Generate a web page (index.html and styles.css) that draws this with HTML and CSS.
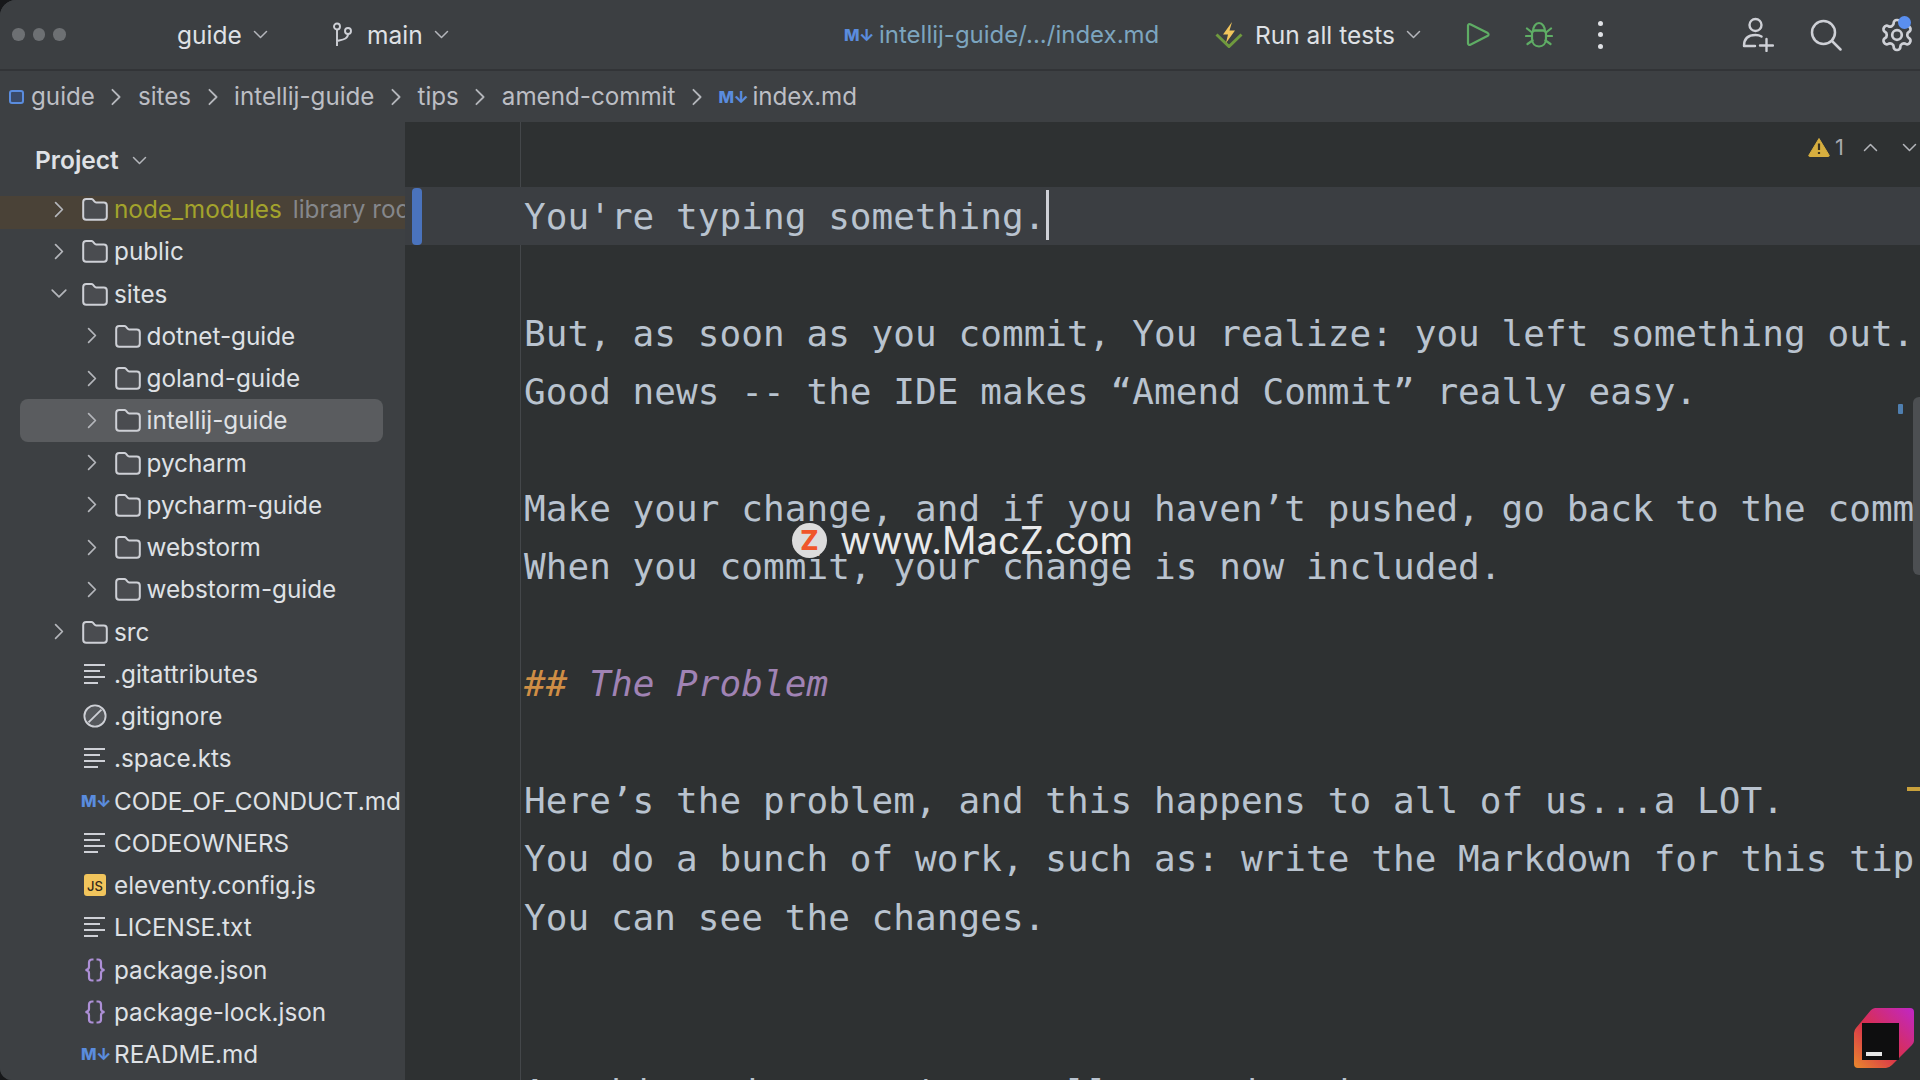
FILE: index.html
```html
<!DOCTYPE html>
<html lang="en">
<head>
<meta charset="utf-8">
<title>intellij-guide index.md</title>
<link rel="stylesheet" href="styles.css">
</head>
<body>
<svg class="defs" width="0" height="0" aria-hidden="true">
  <symbol id="folder" viewBox="0 0 26 24"><path d="M1.2 5a3 3 0 0 1 3-3h5.2a2 2 0 0 1 1.5.7l1.7 2a2 2 0 0 0 1.5.7h7.7a3 3 0 0 1 3 3v11.4a3 3 0 0 1-3 3H4.2a3 3 0 0 1-3-3z" fill="#4a4c50" stroke="#ced0d6" stroke-width="2"/></symbol>
  <symbol id="right" viewBox="0 0 20 20"><path d="M6 2l8 8-8 8" fill="none" stroke="#b4b6bb" stroke-width="2" stroke-linecap="round" stroke-linejoin="round"/></symbol>
  <symbol id="down" viewBox="0 0 20 20"><path d="M2 6l8 8 8-8" fill="none" stroke="#b4b6bb" stroke-width="2" stroke-linecap="round" stroke-linejoin="round"/></symbol>
  <symbol id="txt" viewBox="0 0 26 24"><path d="M2 3h21M2 9h16M2 15h21M2 21h14" fill="none" stroke="#ced0d6" stroke-width="2"/></symbol>
  <symbol id="ban" viewBox="0 0 26 26"><circle cx="13" cy="13" r="11.5" fill="#55585c" stroke="#ced0d6" stroke-width="2"/><path d="M6 20L20 6" stroke="#ced0d6" stroke-width="2"/></symbol>
  <symbol id="brace" viewBox="0 0 26 24"><path d="M11.500 1.500H10a3 3 0 0 0-3 3v4.500c0 1.700-1.200 2.700-3.500 3 2.300.3 3.500 1.300 3.500 3v4.500a3 3 0 0 0 3 3h1.500M14.500 1.500H16a3 3 0 0 1 3 3v4.500c0 1.700 1.200 2.700 3.500 3-2.300.3-3.500 1.300-3.500 3v4.500a3 3 0 0 1-3 3h-1.500" fill="none" stroke="#ad8fd6" stroke-width="2.200"/></symbol>
</svg>

<div class="window">
  <header class="titlebar">
    <div class="tb-lights"><i class="light"></i><i class="light"></i><i class="light"></i></div>
    <div class="tb-project"><span>guide</span><svg class="chev"><use href="#down"/></svg></div>
    <div class="tb-branch">
      <svg class="branch" viewBox="0 0 19 25"><g fill="none" stroke="#ced0d6" stroke-width="1.900"><circle cx="4" cy="4.500" r="3"/><circle cx="15" cy="9" r="3"/><path d="M4 7.500V24M15 12c0 5-5 5.500-11 7"/></g></svg>
      <span>main</span><svg class="chev"><use href="#down"/></svg>
    </div>
    <div class="tb-file"><b class="md">M↓</b><span>intellij-guide/.../index.md</span></div>
    <div class="tb-run">
      <svg class="bolt" viewBox="0 0 28 26"><path d="M1.500 12.500L14 24.500l12.500-12" fill="none" stroke="#6f9a3e" stroke-width="3"/><path d="M17 0L8 12.500h5l-2 8.500 9-12.500h-5.500z" fill="#f2c55c"/></svg>
      <span>Run all tests</span><svg class="chev run-chev"><use href="#down"/></svg>
    </div>
    <div class="tb-play"><svg viewBox="0 0 24 25"><path d="M2 3.500v18a1.500 1.500 0 0 0 2.300 1.200l17.500-9a1.500 1.500 0 0 0 0-2.600L4.300 2.300A1.500 1.500 0 0 0 2 3.500z" fill="none" stroke="#5fad65" stroke-width="2.200" stroke-linejoin="round"/></svg></div>
    <div class="tb-bug"><svg viewBox="0 0 28 27"><g fill="none" stroke="#5fad65" stroke-width="2.200" stroke-linecap="round"><path d="M8 10.500c0-4.500 2.500-8.500 6-8.500s6 4 6 8.500"/><path d="M7 12.500c0-2 1-3 3-3h8c2 0 3 1 3 3v5c0 5-3 8-7 8s-7-3-7-8z"/><path d="M9 9.500h10M2 7.500l5 4M26 7.500l-5 4M1 15h6M27 15h-6M2.500 23l5-3.500M25.500 23l-5-3.500"/></g></svg></div>
    <div class="tb-more"><i></i><i></i><i></i></div>
    <div class="tb-user"><svg viewBox="0 0 32 35"><g fill="none" stroke="#ced0d6" stroke-width="2.400" stroke-linecap="round"><circle cx="13.500" cy="8" r="6"/><path d="M2 29c0-7 4-11 11.500-11 2.500 0 4.500.5 6 1.500M2 29h11M18 28.500h13M24.500 22v12"/></g></svg></div>
    <div class="tb-search"><svg viewBox="0 0 32 32"><g fill="none" stroke="#ced0d6" stroke-width="2.500" stroke-linecap="round"><circle cx="13.500" cy="13.500" r="11.500"/><path d="M22 22l8.500 8.500"/></g></svg></div>
    <div class="tb-gear">
      <svg viewBox="0 0 24 24"><g fill="none" stroke="#ced0d6" stroke-width="1.800" stroke-linejoin="round"><path d="M12.220 2h-.44a2 2 0 0 0-2 2v.18a2 2 0 0 1-1 1.730l-.43.25a2 2 0 0 1-2 0l-.15-.08a2 2 0 0 0-2.730.73l-.22.38a2 2 0 0 0 .73 2.730l.15.1a2 2 0 0 1 1 1.720v.51a2 2 0 0 1-1 1.740l-.15.09a2 2 0 0 0-.73 2.730l.22.38a2 2 0 0 0 2.730.73l.15-.08a2 2 0 0 1 2 0l.43.25a2 2 0 0 1 1 1.730V20a2 2 0 0 0 2 2h.44a2 2 0 0 0 2-2v-.18a2 2 0 0 1 1-1.730l.43-.25a2 2 0 0 1 2 0l.15.08a2 2 0 0 0 2.730-.73l.22-.39a2 2 0 0 0-.73-2.730l-.15-.08a2 2 0 0 1-1-1.740v-.5a2 2 0 0 1 1-1.740l.15-.09a2 2 0 0 0 .73-2.730l-.22-.38a2 2 0 0 0-2.730-.73l-.15.08a2 2 0 0 1-2 0l-.43-.25a2 2 0 0 1-1-1.730V4a2 2 0 0 0-2-2z"/><circle cx="12" cy="12" r="3.200"/></g></svg>
      <i class="dot"></i>
    </div>
  </header>

  <nav class="crumbs">
    <span class="crumb-root"><i class="module"></i>guide</span>
    <svg class="sep"><use href="#right"/></svg><span>sites</span>
    <svg class="sep"><use href="#right"/></svg><span>intellij-guide</span>
    <svg class="sep"><use href="#right"/></svg><span>tips</span>
    <svg class="sep"><use href="#right"/></svg><span>amend-commit</span>
    <svg class="sep"><use href="#right"/></svg><span class="crumb-file"><b class="md">M↓</b>index.md</span>
  </nav>

  <main class="body">
    <aside class="sidebar">
      <div class="side-head"><span>Project</span><svg class="chev"><use href="#down"/></svg></div>
      <div class="row l1 lib"><svg class="arrow"><use href="#right"/></svg><svg class="ico"><use href="#folder"/></svg><span class="name">node_modules</span><span class="hint">library root</span></div>
      <div class="row l1"><svg class="arrow"><use href="#right"/></svg><svg class="ico"><use href="#folder"/></svg><span class="name">public</span></div>
      <div class="row l1"><svg class="arrow"><use href="#down"/></svg><svg class="ico"><use href="#folder"/></svg><span class="name">sites</span></div>
      <div class="row l2"><svg class="arrow"><use href="#right"/></svg><svg class="ico"><use href="#folder"/></svg><span class="name">dotnet-guide</span></div>
      <div class="row l2"><svg class="arrow"><use href="#right"/></svg><svg class="ico"><use href="#folder"/></svg><span class="name">goland-guide</span></div>
      <div class="row l2 sel"><svg class="arrow"><use href="#right"/></svg><svg class="ico"><use href="#folder"/></svg><span class="name">intellij-guide</span></div>
      <div class="row l2"><svg class="arrow"><use href="#right"/></svg><svg class="ico"><use href="#folder"/></svg><span class="name">pycharm</span></div>
      <div class="row l2"><svg class="arrow"><use href="#right"/></svg><svg class="ico"><use href="#folder"/></svg><span class="name">pycharm-guide</span></div>
      <div class="row l2"><svg class="arrow"><use href="#right"/></svg><svg class="ico"><use href="#folder"/></svg><span class="name">webstorm</span></div>
      <div class="row l2"><svg class="arrow"><use href="#right"/></svg><svg class="ico"><use href="#folder"/></svg><span class="name">webstorm-guide</span></div>
      <div class="row l1"><svg class="arrow"><use href="#right"/></svg><svg class="ico"><use href="#folder"/></svg><span class="name">src</span></div>
      <div class="row l1"><i class="arrow"></i><svg class="ico"><use href="#txt"/></svg><span class="name">.gitattributes</span></div>
      <div class="row l1"><i class="arrow"></i><svg class="ico"><use href="#ban"/></svg><span class="name">.gitignore</span></div>
      <div class="row l1"><i class="arrow"></i><svg class="ico"><use href="#txt"/></svg><span class="name">.space.kts</span></div>
      <div class="row l1"><i class="arrow"></i><b class="md ico-md">M↓</b><span class="name">CODE_OF_CONDUCT.md</span></div>
      <div class="row l1"><i class="arrow"></i><svg class="ico"><use href="#txt"/></svg><span class="name">CODEOWNERS</span></div>
      <div class="row l1"><i class="arrow"></i><b class="js">JS</b><span class="name">eleventy.config.js</span></div>
      <div class="row l1"><i class="arrow"></i><svg class="ico"><use href="#txt"/></svg><span class="name">LICENSE.txt</span></div>
      <div class="row l1"><i class="arrow"></i><svg class="ico"><use href="#brace"/></svg><span class="name">package.json</span></div>
      <div class="row l1"><i class="arrow"></i><svg class="ico"><use href="#brace"/></svg><span class="name">package-lock.json</span></div>
      <div class="row l1"><i class="arrow"></i><b class="md ico-md">M↓</b><span class="name">README.md</span></div>
    </aside>

    <section class="editor">
      <div class="inspect">
        <svg class="warn" viewBox="0 0 22 20"><path d="M11 1.500L21 18a1 1 0 0 1-.8 1.500H1.800A1 1 0 0 1 1 18z" fill="#d6ae3f" stroke="#d6ae3f" stroke-linejoin="round"/><path d="M11 6.500v6.500M11 15v2" stroke="#3c3320" stroke-width="2.200"/></svg>
        <span class="count">1</span>
        <svg class="nav up"><use href="#down"/></svg>
        <svg class="nav"><use href="#down"/></svg>
      </div>
      <div class="ln cur">You're typing something.<i class="caret"></i></div>
      <div class="ln"></div>
      <div class="ln">But, as soon as you commit, You realize: you left something out.</div>
      <div class="ln">Good news -- the IDE makes “Amend Commit” really easy.</div>
      <div class="ln"></div>
      <div class="ln">Make your change, and if you haven’t pushed, go back to the commit</div>
      <div class="ln">When you commit, your change is now included.</div>
      <div class="ln"></div>
      <div class="ln head"><em class="hash">##</em> <em class="title">The Problem</em></div>
      <div class="ln"></div>
      <div class="ln">Here’s the problem, and this happens to all of us...a LOT.</div>
      <div class="ln">You do a bunch of work, such as: write the Markdown for this tip</div>
      <div class="ln">You can see the changes.</div>
      <div class="ln"></div>
      <div class="ln"></div>
      <div class="ln">At this point, you've really committed</div>
      <i class="thumb"></i>
      <i class="mark-blue"></i>
      <i class="mark-yellow"></i>
      <svg class="toolbox" viewBox="0 0 60 60">
        <defs><linearGradient id="tb" x1="0" y1="1" x2="1" y2="0"><stop offset="0" stop-color="#e8892c"/><stop offset=".45" stop-color="#d92f4d"/><stop offset="1" stop-color="#c026c8"/></linearGradient></defs>
        <path d="M21 0h35a4 4 0 0 1 4 4v29a6 6 0 0 1-2 4L38 57a10 10 0 0 1-6 3H4a4 4 0 0 1-4-4V25a8 8 0 0 1 2-5L17 2a7 7 0 0 1 4-2z" fill="url(#tb)"/>
        <rect x="8" y="15" width="37" height="37" fill="#0e0e0f"/>
        <rect x="12" y="44" width="16" height="4" fill="#e6e6e6"/>
      </svg>
    </section>
  </main>

  <div class="watermark"><i class="wm-badge">Z</i><span>www.MacZ.com</span></div>
</div>
</body>
</html>
```

FILE: styles.css
```css
* { box-sizing: border-box; }
html, body { margin: 0; height: 100%; background: #17181a; overflow: hidden; }
body { font-family: Inter, "Noto Sans", sans-serif; color: #dfe1e5; }
i { font-style: normal; }
.defs { position: absolute; }

.window {
  position: relative;
  width: 1920px;
  height: 1080px;
  display: flex;
  flex-direction: column;
  overflow: hidden;
  background: #3d4043;
  border-radius: 16px 0 0 12px;
}

/* title bar */
.titlebar {
  flex: none;
  height: 71px;
  display: flex;
  align-items: center;
  background: #3c3f42;
  border-bottom: 2px solid #323437;
  font-size: 24.500px;
}
.titlebar > div { flex: none; display: flex; align-items: center; height: 100%; }
.tb-lights { width: 177px; padding-left: 12px; gap: 8px; }
.light { width: 12.500px; height: 12.500px; border-radius: 50%; background: #6d7073; }
.tb-project { width: 156px; }
.tb-branch { width: 511px; }
.tb-file { width: 371px; color: #7ca5bf; font-size: 24px; }
.tb-run { width: 251px; }
.tb-play { width: 59px; }
.tb-bug { width: 66px; }
.tb-more { width: 18px; flex-direction: column; justify-content: center; gap: 6.500px; padding-left: 0; }
.tb-user { margin-left: 133px; width: 68px; }
.tb-search { width: 69px; }
.tb-gear { position: relative; width: 38px; }

.chev { width: 15px; height: 15px; margin-left: 11px; }
.branch { width: 19px; height: 25px; margin-right: 15px; }
.bolt { width: 28px; height: 26px; margin-right: 12px; }
.run-chev { margin-left: 11px; }
.tb-play svg { width: 24px; height: 25px; }
.tb-bug svg { width: 28px; height: 27px; }
.tb-more i { width: 5px; height: 5px; border-radius: 50%; background: #dfe1e5; }
.tb-user svg { width: 32px; height: 35px; }
.tb-search svg { width: 32px; height: 32px; }
.tb-gear svg { width: 36px; height: 36px; }
.dot {
  position: absolute;
  top: 16px;
  left: 19px;
  width: 13px;
  height: 13px;
  border-radius: 50%;
  background: #5a8ff0;
}
.md { font-weight: 800; color: #5a8cde; font-size: 16.500px; letter-spacing: -.5px; }
.tb-file .md { width: 35px; }

/* breadcrumbs */
.crumbs {
  flex: none;
  height: 51px;
  padding-left: 9px;
  display: flex;
  align-items: center;
  gap: 17.500px;
  background: #3d4043;
  color: #bcbec4;
  font-size: 24.200px;
}
.crumb-root, .crumb-file { display: flex; align-items: center; }
.module {
  width: 15px;
  height: 14px;
  margin-right: 7px;
  border: 2px solid #5a8cde;
  border-radius: 3px;
  background: #3a4a68;
}
.sep { flex: none; width: 18px; height: 18px; margin: 0 -5px; }
.crumb-file .md { width: 34px; }

/* main */
.body { flex: 1; min-height: 0; display: flex; }

.sidebar { flex: none; width: 405px; background: #3d4043; overflow: hidden; font-size: 24.300px; }
.side-head {
  height: 66px;
  padding: 20px 0 10px 35px;
  display: flex;
  align-items: center;
  font-weight: 600;
  font-size: 24.500px;
}
.side-head .chev { margin-left: 13px; }
.row {
  height: 42.250px;
  display: flex;
  align-items: center;
  white-space: nowrap;
  overflow: hidden;
}
.l1 { padding-left: 49px; }
.l2 { padding-left: 81.500px; }
.sel { margin: 0 22px 0 20px; padding-left: 61.500px; height: 42.250px; border-radius: 8px; background: #5a5c5f; }
.lib { background: linear-gradient(transparent 8px, #4a4237 8px, #4a4237 41px, transparent 41px); }
.arrow { flex: none; width: 20px; height: 17px; }
.ico { flex: none; width: 26px; height: 24px; margin: 0 6px 0 13px; }
.ico-md { flex: none; width: 33px; margin-left: 12px; text-align: left; }
.js {
  flex: none;
  width: 22px;
  height: 22px;
  margin: 0 8px 0 15px;
  border-radius: 3px;
  background: #f2c55c;
  color: #33291a;
  font-size: 13px;
  font-weight: 500;
  line-height: 24px;
  text-align: center;
}
.lib .name { color: #a3a32c; }
.hint { margin-left: 11px; color: #85878b; }

/* editor */
.editor {
  position: relative;
  flex: 1;
  min-width: 0;
  padding-top: 65px;
  overflow: hidden;
  background: linear-gradient(90deg, transparent 115px, #44474a 115px, #44474a 116px, transparent 116px), #2e3132;
  font-family: "DejaVu Sans Mono", "Liberation Mono", monospace;
  font-size: 36px;
  letter-spacing: .05px;
  color: #b9c3cf;
}
.ln {
  height: 58.400px;
  line-height: 58.400px;
  padding: 1px 0 0 119px;
  white-space: pre;
}
.cur { position: relative; background: #3b3e42; }
.cur::before {
  content: "";
  position: absolute;
  left: 7px;
  top: 1px;
  width: 10px;
  height: 57px;
  border-radius: 4px;
  background: #4a73bd;
}
.caret {
  display: inline-block;
  width: 3px;
  height: 50px;
  margin-left: 1px;
  background: #ced0d6;
  vertical-align: -11px;
}
.hash { color: #cf8e45; }
.title { color: #a083b4; }

.inspect {
  position: absolute;
  top: 12px;
  left: 1403px;
  display: flex;
  align-items: center;
  font-family: Inter, sans-serif;
  font-size: 22px;
  color: #a6a8ad;
}
.warn { width: 22px; height: 20px; }
.count { margin-left: 5px; }
.nav { width: 15px; height: 15px; }
.up { margin-left: 19px; margin-right: 24px; transform: rotate(180deg); }

.thumb { position: absolute; top: 275px; right: 0; width: 7px; height: 178px; border-radius: 6px 0 0 6px; background: #4c4f52; }
.mark-blue { position: absolute; top: 282px; left: 1493px; width: 5px; height: 10px; border-radius: 1px; background: #4f7fb0; }
.mark-yellow { position: absolute; top: 665px; right: 0; width: 13px; height: 4px; background: #c9a13c; }
.toolbox { position: absolute; left: 1449px; top: 886px; width: 60px; height: 60px; }

/* watermark overlay */
.watermark {
  position: absolute;
  left: 792px;
  top: 516px;
  display: flex;
  align-items: center;
  gap: 13px;
  font-size: 38.200px;
  line-height: 48px;
  color: #e8e9ea;
}
.wm-badge {
  width: 35px;
  height: 35px;
  border-radius: 50%;
  background: #dcdcdc;
  color: #f0562a;
  font-size: 27px;
  font-weight: 800;
  line-height: 35px;
  text-align: center;
}
```
